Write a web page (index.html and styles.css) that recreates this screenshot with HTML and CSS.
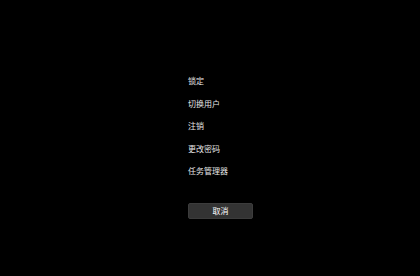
FILE: index.html
```html
<!DOCTYPE html>
<html>
<head>
<meta charset="UTF-8">
<title>安全选项</title>
<link rel="stylesheet" href="styles.css">
</head>
<body>
	<div id="options">
		<ul class="menu">
			<li>锁定</li>
			<li>切换用户</li>
			<li>注销</li>
			<li>更改密码</li>
			<li>任务管理器</li>
		</ul>
		<button class="cancel">取消</button>
	</div>
</body>
</html>
```
FILE: styles.css
```css
html { height: 100%; }
body { margin: 0; height: 100%; background: #000; color: #e6e6e6; font-family: "Noto Sans CJK SC", "Noto Sans", sans-serif; }
#options { display: flex; flex-direction: column; align-items: flex-start; padding: 70px 0 0 188px; }
.menu { list-style: none; margin: 0; padding: 0; }
.menu li { font-size: 8px; line-height: 22.5px; height: 22.5px; }
.cancel { margin-top: 20.5px; width: 65px; height: 16px; padding: 0; border: 1px solid #3c3c3c; border-radius: 2px; background: #333; color: #fff; font-family: inherit; font-size: 8px; line-height: 14px; }
```
